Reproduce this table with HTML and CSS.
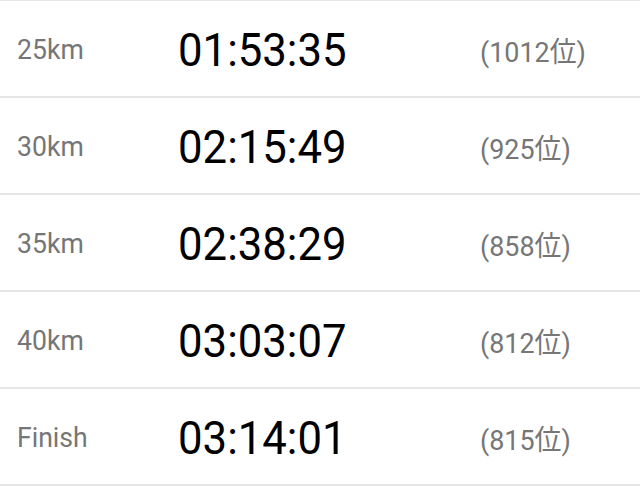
FILE: index.html
```html
<!DOCTYPE html>
<html lang="ja">
<head>
    <meta charset="UTF-8">
    <meta name="viewport" content="width=device-width, initial-scale=1.0">
    <title>Split</title>
    <link rel="stylesheet" href="styles.css">
</head>
<body>

<div class="splits">
    <div class="row">
        <span class="point">25km</span>
        <span class="time">01:53:35</span>
        <span class="rank">(1012位)</span>
    </div>
    <div class="row">
        <span class="point">30km</span>
        <span class="time">02:15:49</span>
        <span class="rank">(925位)</span>
    </div>
    <div class="row">
        <span class="point">35km</span>
        <span class="time">02:38:29</span>
        <span class="rank">(858位)</span>
    </div>
    <div class="row">
        <span class="point">40km</span>
        <span class="time">03:03:07</span>
        <span class="rank">(812位)</span>
    </div>
    <div class="row">
        <span class="point">Finish</span>
        <span class="time">03:14:01</span>
        <span class="rank">(815位)</span>
    </div>
</div>

</body>
</html>
```

FILE: styles.css
```css
body {
    margin: 0;
    background: #ffffff;
    font-family: Roboto, "Noto Sans CJK JP", sans-serif;
}
.splits {
    margin-top: -1px;
    border-top: 2px solid #e6e6e6;
}
.row {
    display: grid;
    grid-template-columns: 161px 302px 1fr;
    align-items: center;
    height: 95px;
    padding-left: 17px;
    border-bottom: 2px solid #e6e6e6;
}
/* the source screenshot is a little narrow, so the text is squeezed sideways */
.point, .time, .rank {
    justify-self: start;
    transform-origin: left center;
    padding-top: 2px;
}
.point {
    font-size: 28px;
    color: #767676;
    transform: scaleX(0.95);
}
.time {
    font-size: 47px;
    color: #000000;
    transform: scaleX(0.93);
}
.rank {
    font-size: 28px;
    color: #767676;
    transform: scaleX(0.96);
}
```
